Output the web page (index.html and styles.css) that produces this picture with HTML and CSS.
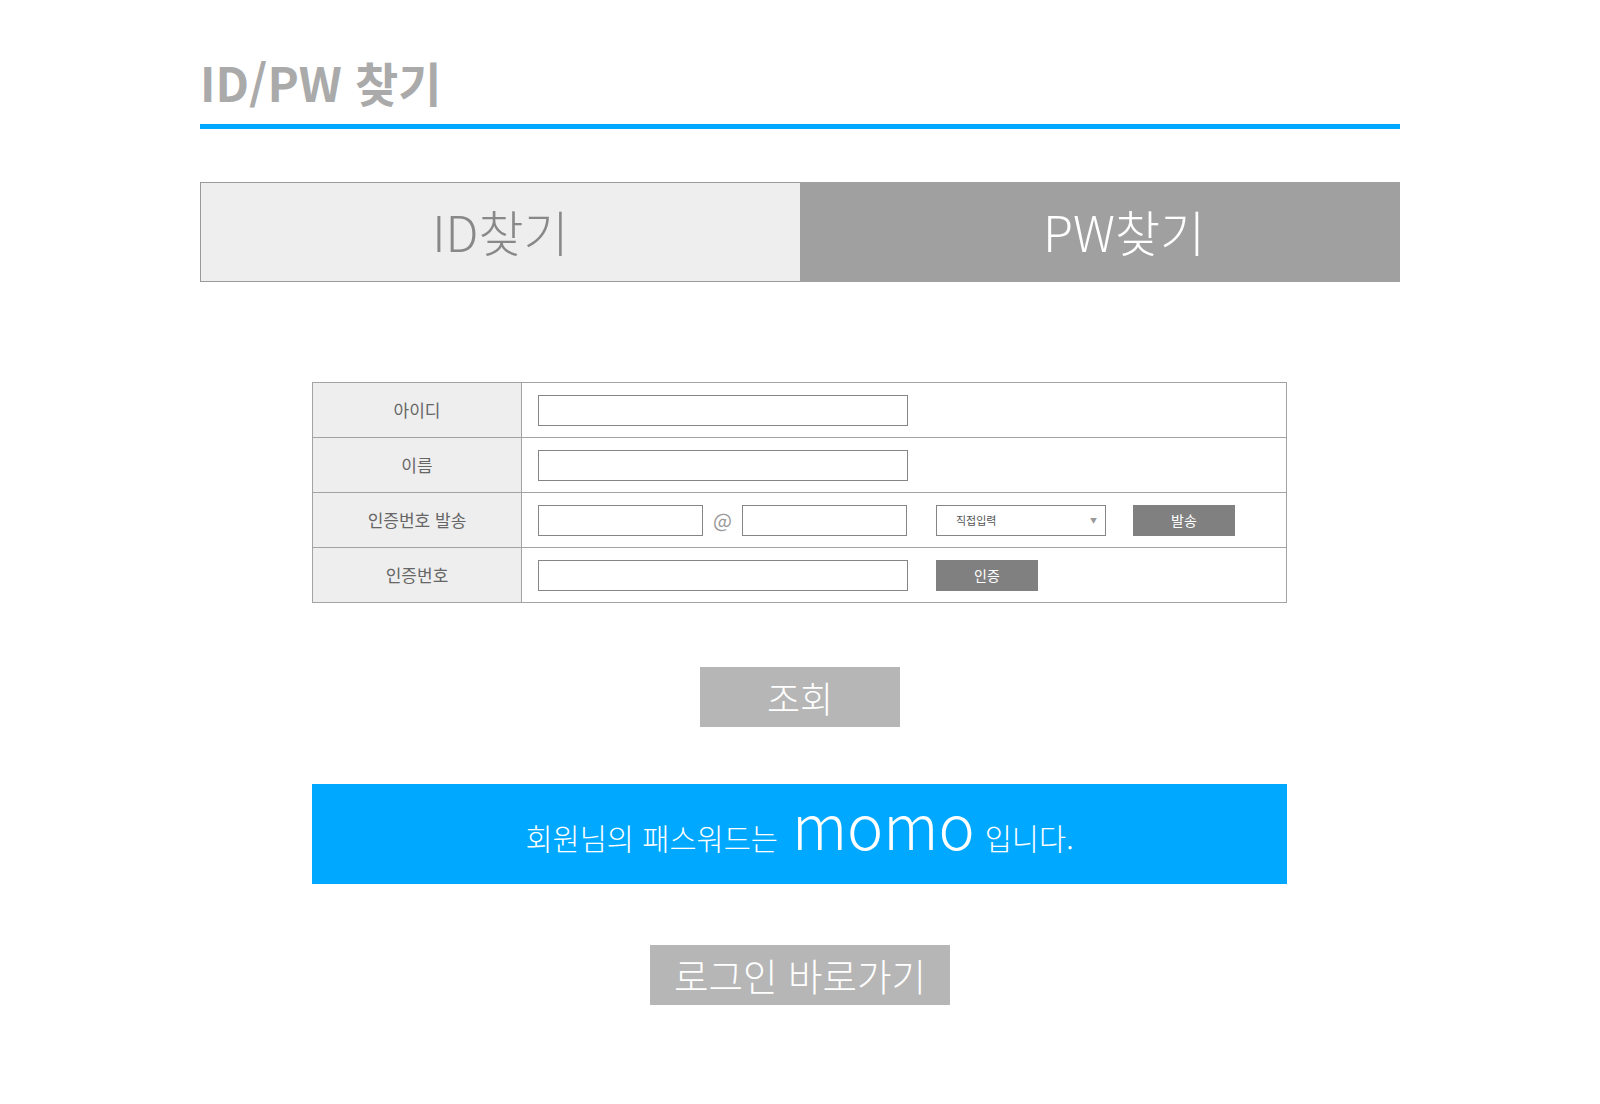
FILE: index.html
```html
<!DOCTYPE html>
<html lang="ko">
<head>
<meta charset="utf-8">
<title>ID/PW 찾기</title>
<link rel="stylesheet" href="styles.css">
</head>
<body>
<div class="page">
  <h1 class="title">ID/PW 찾기</h1>
  <div class="tabs">
    <div class="tab tab-id">ID찾기</div>
    <div class="tab tab-pw">PW찾기</div>
  </div>

  <table class="form">
    <tr>
      <th>아이디</th>
      <td><div class="field"><span class="input w370"></span></div></td>
    </tr>
    <tr>
      <th>이름</th>
      <td><div class="field"><span class="input w370"></span></div></td>
    </tr>
    <tr>
      <th>인증번호 발송</th>
      <td>
        <div class="field">
          <span class="input w165"></span>
          <span class="at">@</span>
          <span class="input w165"></span>
          <span class="select"><span class="select-text">직접입력</span><span class="arrow">▼</span></span>
          <span class="btn-dark btn-send">발송</span>
        </div>
      </td>
    </tr>
    <tr>
      <th>인증번호</th>
      <td>
        <div class="field">
          <span class="input w370"></span>
          <span class="btn-dark btn-verify">인증</span>
        </div>
      </td>
    </tr>
  </table>

  <div class="center"><div class="btn-light btn-search">조회</div></div>

  <div class="result">
    <span class="result-text">회원님의 패스워드는</span>
    <span class="result-pw">momo</span>
    <span class="result-text">입니다.</span>
  </div>

  <div class="center"><div class="btn-light btn-login">로그인 바로가기</div></div>
</div>
</body>
</html>
```

FILE: styles.css
```css
* { box-sizing: border-box; }
html, body {
  margin: 0;
  padding: 0;
  background: #ffffff;
  font-family: "Noto Sans CJK KR", "Noto Sans", sans-serif;
}
.page {
  width: 1200px;
  margin-left: 200px;
  padding-top: 58px;
}
.title {
  margin: 0;
  font-size: 47px;
  line-height: 48px;
  font-weight: 700;
  color: #aaaaaa;
  padding-bottom: 18px;
  border-bottom: 5px solid #00a9ff;
}
.tabs {
  display: flex;
  margin-top: 53px;
  height: 100px;
}
.tab {
  flex: 0 0 600px;
  display: flex;
  align-items: center;
  justify-content: center;
  font-size: 49px;
  font-weight: 300;
  line-height: 1;
  padding-bottom: 4px;
}
.tab-id {
  background: #eeeeee;
  border: 1px solid #9a9a9a;
  border-right: none;
  color: #888888;
}
.tab-pw {
  background: #a0a0a0;
  color: #ffffff;
  padding-left: 48px;
}
.form {
  margin: 100px 0 0 112px;
  width: 975px;
  border-collapse: collapse;
}
.form th, .form td {
  border: 1px solid #a3a3a3;
  height: 55px;
  padding: 0;
}
.form th {
  width: 209px;
  background: #eeeeee;
  font-size: 17px;
  font-weight: 400;
  color: #666666;
  text-align: center;
  padding-bottom: 1px;
}
.form td {
  padding-left: 16px;
}
.field {
  display: flex;
  align-items: center;
}
.input {
  display: block;
  height: 31px;
  border: 1px solid #858585;
  background: #fff;
}
.w370 { width: 370px; }
.w165 { width: 165px; }
.at {
  width: 39px;
  text-align: center;
  font-size: 20px;
  color: #999999;
  line-height: 1;
}
.select {
  display: flex;
  align-items: center;
  justify-content: space-between;
  margin-left: 29px;
  width: 170px;
  height: 31px;
  border: 1px solid #858585;
  padding: 0 8px 0 19px;
}
.select-text {
  font-size: 11px;
  color: #555555;
}
.arrow {
  font-size: 7px;
  color: #999999;
}
.btn-dark {
  display: flex;
  align-items: center;
  justify-content: center;
  width: 102px;
  height: 31px;
  background: #808080;
  color: #ffffff;
  font-size: 14px;
}
.btn-send { margin-left: 27px; }
.btn-verify { margin-left: 28px; }
.center {
  display: flex;
  justify-content: center;
}
.btn-light {
  display: flex;
  align-items: center;
  justify-content: center;
  background: #b6b6b6;
  color: #ffffff;
  font-weight: 300;
  line-height: 1;
}
.btn-search {
  margin-top: 64px;
  width: 200px;
  height: 60px;
  font-size: 36px;
}
.result {
  margin: 57px 0 0 112px;
  width: 975px;
  height: 100px;
  background: #00a9ff;
  color: #ffffff;
  display: flex;
  align-items: baseline;
  justify-content: center;
  padding-top: 9px;
  font-weight: 300;
}
.result-text {
  font-size: 29.5px;
}
.result-pw {
  font-size: 61px;
  margin: 0 10px 0 14px;
  line-height: 1;
}
.btn-login {
  margin-top: 61px;
  width: 300px;
  height: 60px;
  font-size: 37.5px;
}
```
